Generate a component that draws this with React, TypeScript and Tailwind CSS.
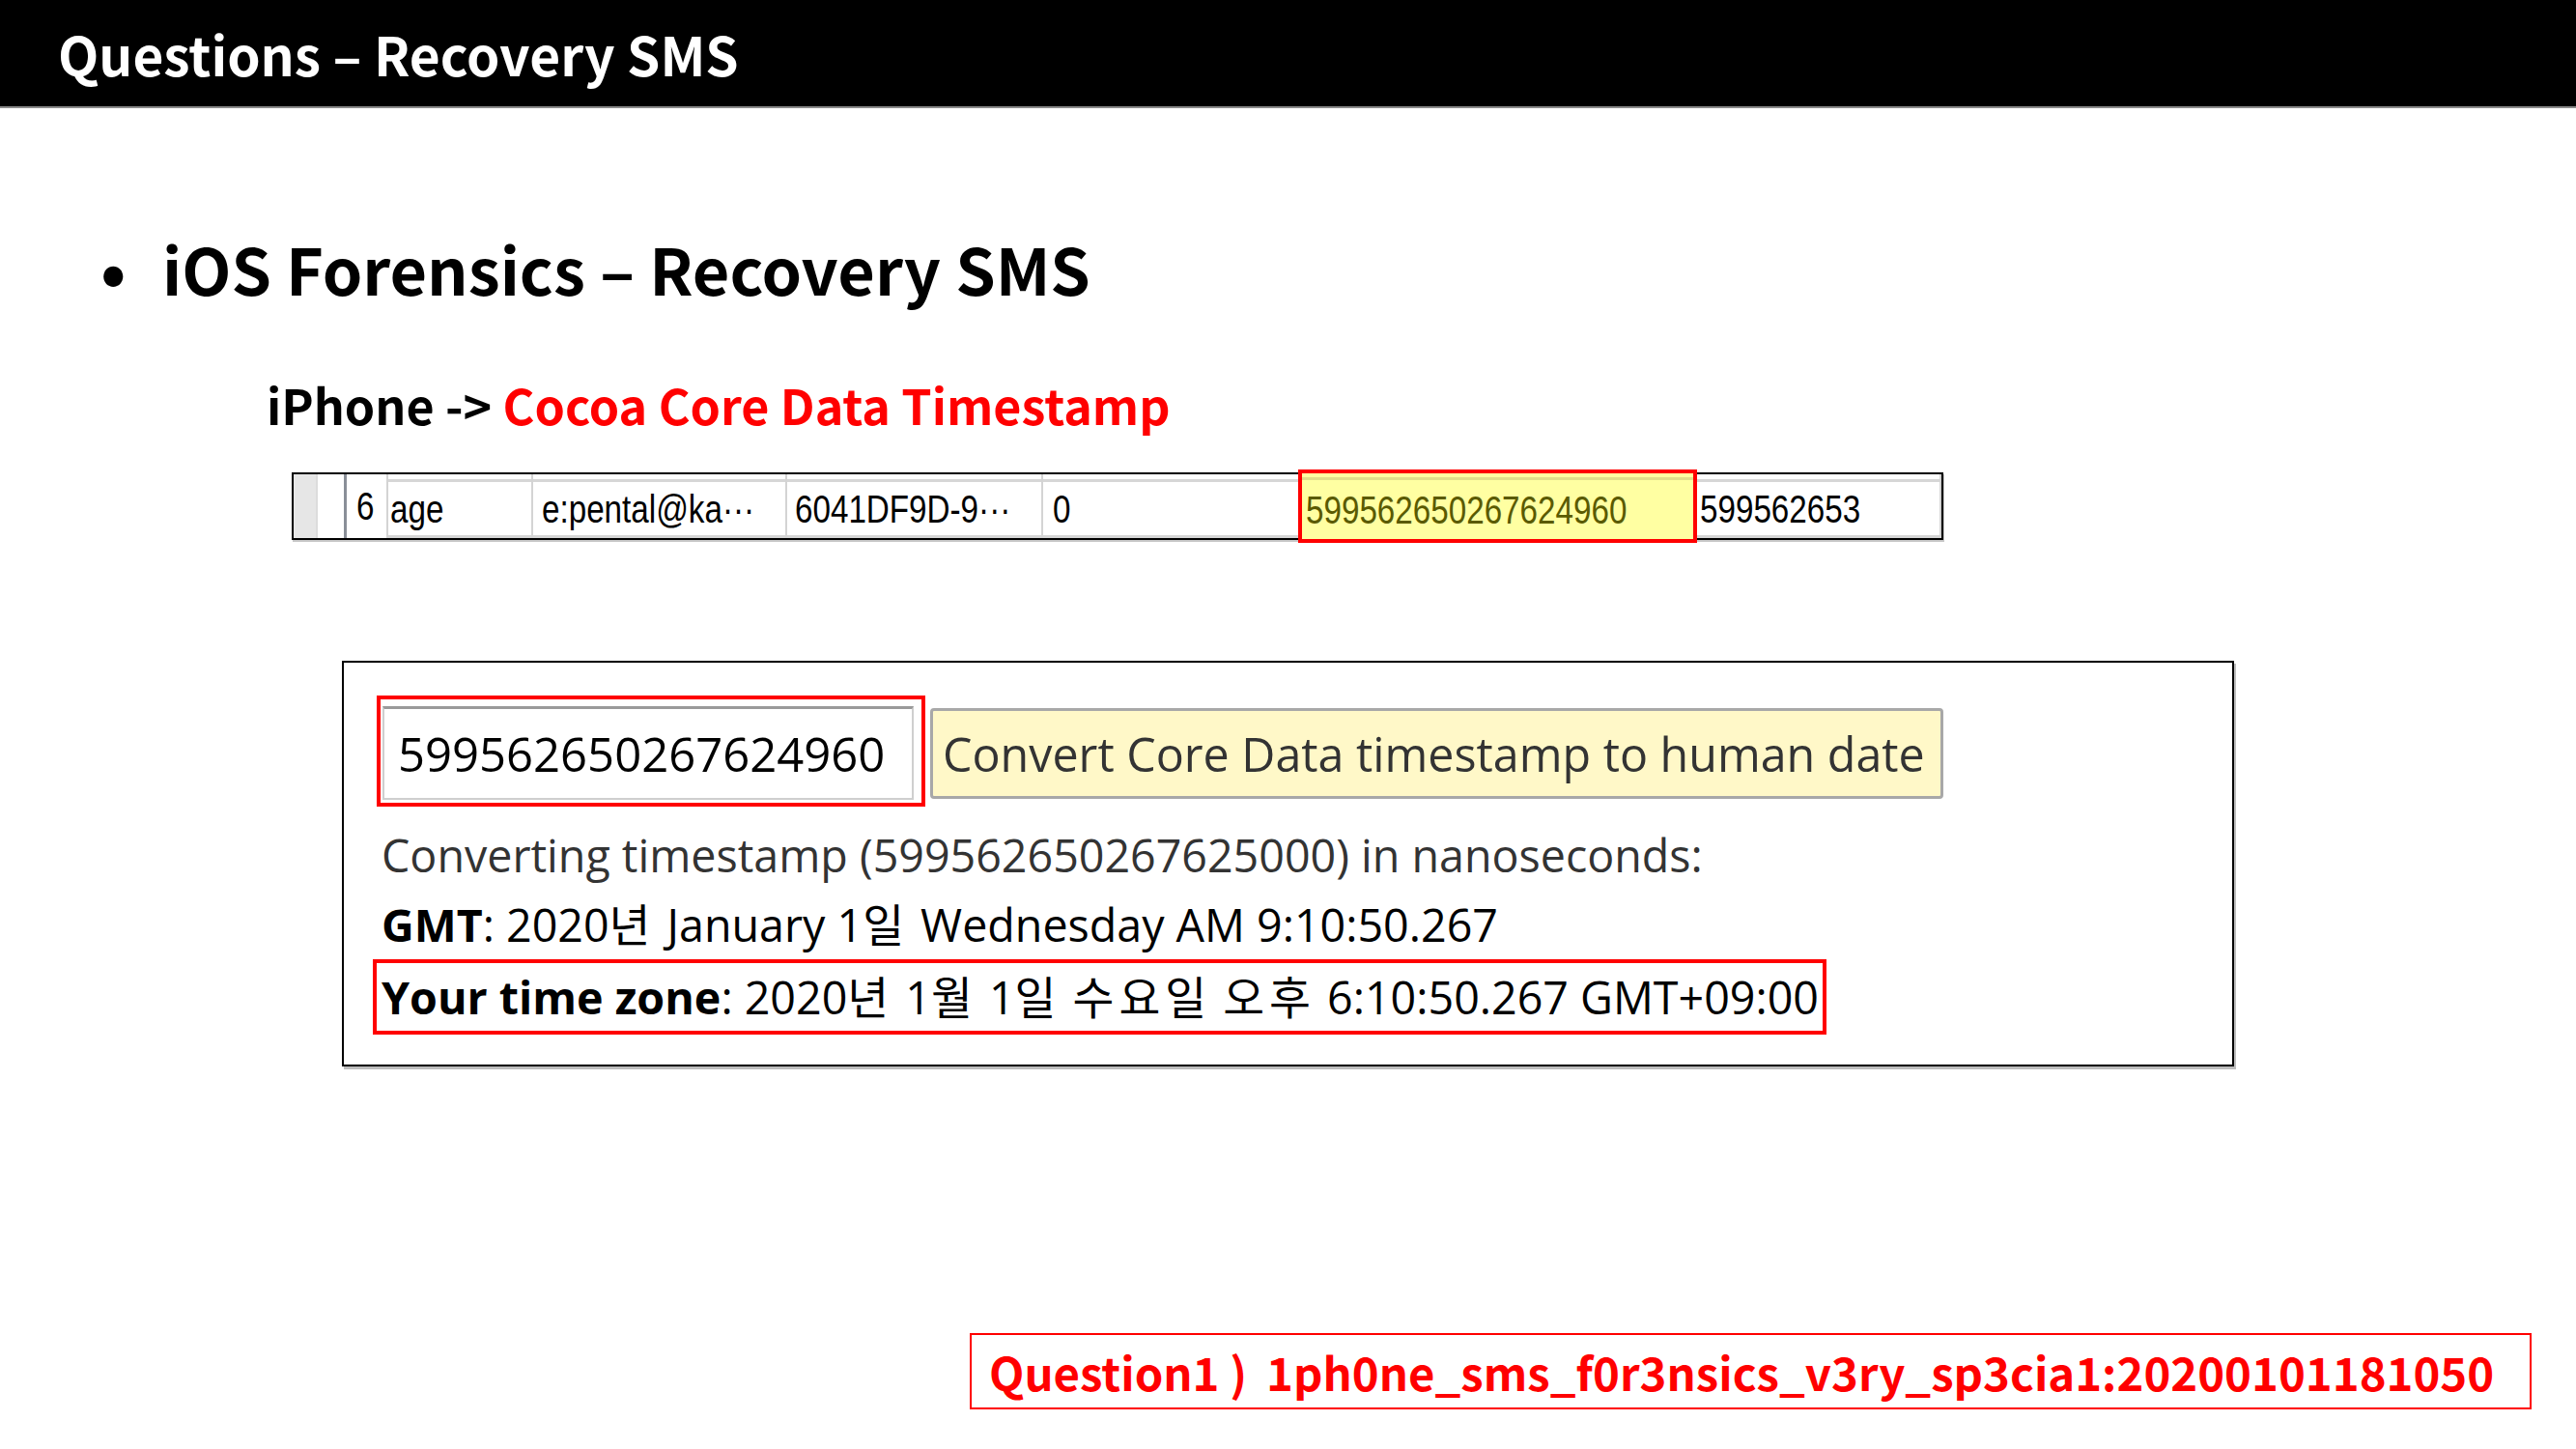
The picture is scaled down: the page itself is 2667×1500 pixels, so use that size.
import React from "react";

const kr = "font-['Noto_Sans_CJK_KR',sans-serif]";
const web = "font-['Open_Sans','Noto_Sans_CJK_KR',sans-serif]";
const grid = "font-['Liberation_Sans',sans-serif]";

function Cell({ w, text, pl, top = true, className = "" }: { w: number; text: string; pl: number; top?: boolean; className?: string }) {
  return (
    <div
      className={`flex flex-col shrink-0 border-l-2 border-[#d4d4d4] ${className}`}
      style={{ width: w }}
    >
      <div className={`h-[5px] shrink-0 ${top ? "border-b-[3px] border-[#d6d6d6] h-[8px]" : ""}`} />
      <div className="flex-1 flex items-center overflow-hidden" style={{ paddingLeft: pl }}>
        <span className={`${grid} inline-block origin-left scale-x-[0.83] text-[40px] leading-none text-black whitespace-nowrap`}>{text}</span>
      </div>
      <div className="h-[3px] shrink-0 bg-[#d6d6d6]" />
    </div>
  );
}

function H({ children }: { children: React.ReactNode }) {
  return <span className="tracking-[5px]">{children}</span>;
}

export default function App() {
  return (
    <div className="w-[2667px] h-[1500px] bg-white overflow-hidden">
      {/* header */}
      <div className="h-[112px] bg-black border-b-2 border-[#8a8a8a] flex items-center pl-[60px]">
        <span className={`${kr} font-bold text-white text-[55px] leading-none`}>Questions – Recovery SMS</span>
      </div>

      {/* bullet title */}
      <div className="mt-[128px] h-[74px] flex items-center pl-[104px]">
        <span className={`${kr} font-bold text-black text-[70px] leading-none w-[64px] shrink-0`}>•</span>
        <span className={`${kr} font-bold text-black text-[66.5px] leading-none`}>iOS Forensics – Recovery SMS</span>
      </div>

      {/* sub title */}
      <div className="mt-[67px] h-[74px] flex items-center pl-[276px]">
        <span className={`${kr} font-bold text-black text-[50.2px] leading-none whitespace-pre`}>iPhone -&gt; </span>
        <span className={`${kr} font-bold text-[#ff0000] text-[50.2px] leading-none`}>Cocoa Core Data Timestamp</span>
      </div>

      {/* grid row */}
      <div className="mt-[34px] ml-[302px] w-[1710px] h-[70px] border-2 border-black shadow-[1px_2px_0_#c8c8c8] flex">
        <div className="w-[23px] shrink-0 bg-[#e6e6e6]" />
        <div className="w-[29px] shrink-0 border-l-2 border-[#dcdcdc] bg-white" />
        <div className="w-[3px] shrink-0 bg-[#8a8f98]" />
        <div className="w-[41px] shrink-0 flex items-center pl-[10px]">
          <span className={`${grid} inline-block origin-left scale-x-[0.83] text-[40px] leading-none text-black`}>6</span>
        </div>
        <Cell w={150} text="age" pl={2} />
        <Cell w={263} text="e:pental@ka···" pl={9} />
        <Cell w={265} text="6041DF9D-9···" pl={8} />
        <Cell w={266} text="0" pl={10} />
        <div className="w-[413px] shrink-0 -my-[5px] border-[4px] border-[#ff0000] bg-[#ffffa2] flex flex-col">
          <div className="shrink-0 border-b-[3px] border-[#e2e08a] h-[7px]" />
          <div className="flex-1 flex items-center pl-[4px]">
            <span className={`${grid} inline-block origin-left scale-x-[0.83] text-[40px] leading-none text-[#5a5a00]`}>599562650267624960</span>
          </div>
        </div>
        <div className="flex-1 flex flex-col">
          <div className="h-[8px] shrink-0 border-b-[3px] border-[#d6d6d6]" />
          <div className="flex-1 flex items-center pl-[3px]">
            <span className={`${grid} inline-block origin-left scale-x-[0.83] text-[40px] leading-none text-black`}>599562653</span>
          </div>
          <div className="h-[3px] shrink-0 bg-[#d6d6d6]" />
        </div>
        <div className="w-[2px] shrink-0 bg-[#d4d4d4]" />
      </div>

      {/* converter box */}
      <div className="mt-[125px] ml-[354px] w-[1959px] border-2 border-black shadow-[2px_3px_0_#bdbdbd] pt-[34px] pl-[34px] pb-[31px]">
        <div className="flex items-center">
          <div className="w-[568px] h-[115px] border-[4px] border-[#ff0000] pl-[2px] pr-[8px] pt-[7px] pb-[3px]">
            <div className="w-full h-full border-2 border-[#cfcfcf] border-t-[3px] border-t-[#9a9a9a] bg-white flex items-center pl-[14px]">
              <span className={`${web} text-[49px] leading-none text-black`}>599562650267624960</span>
            </div>
          </div>
          <div className="ml-[5px] mt-[5px] w-[1049px] h-[94px] rounded-[4px] border-[3px] border-[#a8a8a8] bg-[#fff8c8] flex items-center pl-[10px]">
            <span className={`${web} text-[48.4px] leading-none text-[#333333] whitespace-nowrap`}>Convert Core Data timestamp to human date</span>
          </div>
        </div>
        <div className="mt-[14px] h-[72px] flex items-center pl-[5px]">
          <span className={`${web} text-[46.6px] leading-none text-[#333333] whitespace-nowrap`}>Converting timestamp (599562650267625000) in nanoseconds:</span>
        </div>
        <div className="h-[72px] flex items-center pl-[5px]">
          <span className={`${web} text-[46.6px] leading-none text-black whitespace-nowrap`}>
            <b className="font-bold">GMT</b>: 2020<H>년</H> January 1<H>일</H> Wednesday AM 9:10:50.267
          </span>
        </div>
        <div className="-ml-[4px] w-fit h-[78px] border-[4px] border-[#ff0000] flex items-center pl-[5px] pr-[4px]">
          <span className={`${web} text-[46.6px] leading-none text-black whitespace-nowrap`}>
            <b className="font-bold">Your time zone</b>: 2020<H>년</H> 1<H>월</H> 1<H>일</H> <H>수요일</H> <H>오후</H> 6:10:50.267 GMT+09:00
          </span>
        </div>
      </div>

      {/* answer */}
      <div className="mt-[276px] flex justify-end pr-[46px]">
        <div className="w-[1617px] h-[79px] border-2 border-[#ff0000] flex items-center pl-[18px]">
          <span className={`${kr} font-bold text-[#ff0000] text-[47.3px] leading-none whitespace-nowrap`}>
            Question1 <span className="inline-block mr-[20px]">)</span>1ph0ne_sms_f0r3nsics_v3ry_sp3cia1:20200101181050
          </span>
        </div>
      </div>
    </div>
  );
}
